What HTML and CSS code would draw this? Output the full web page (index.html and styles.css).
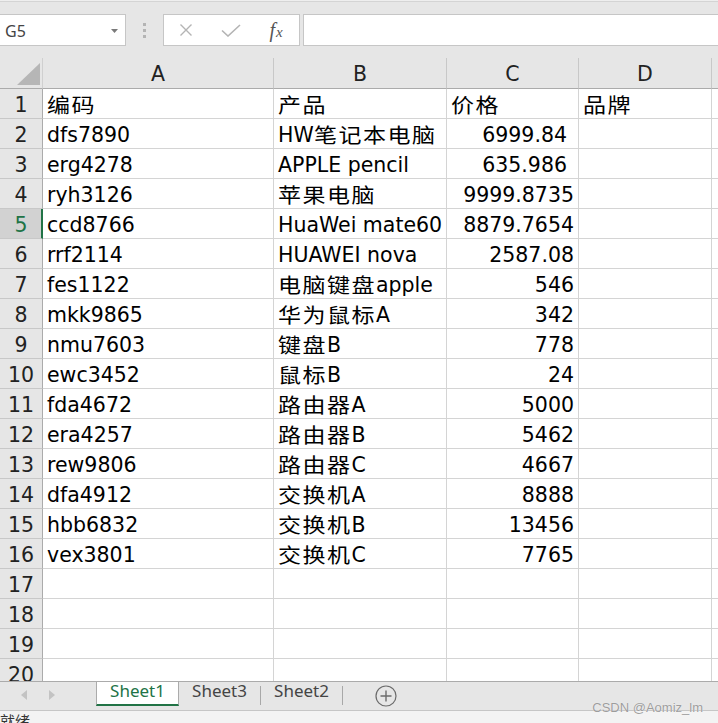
FILE: index.html
```html
<!DOCTYPE html>
<html lang="zh">
<head>
<meta charset="utf-8">
<title>Sheet</title>
<link rel="stylesheet" href="styles.css">
</head>
<body>
<div class="app">
  <div class="topline"></div>
  <div class="fbar">
    <div class="namebox"><span class="nb-text">G5</span><svg class="dd" width="7" height="4" viewBox="0 0 7 4"><path d="M0 0h7L3.5 4z" fill="#7a7a7a"/></svg></div>
    <div class="grip"><i></i><i></i><i></i></div>
    <div class="fbtns">
      <span class="fb"><svg width="14" height="14" viewBox="0 0 14 14"><path d="M1.5 1.5l11 11M12.5 1.5l-11 11" stroke="#b4b4b4" stroke-width="1.4" fill="none"/></svg></span>
      <span class="fb"><svg width="20" height="13" viewBox="0 0 20 13"><path d="M1 6.5l6 5.5L19 1" stroke="#b4b4b4" stroke-width="1.6" fill="none"/></svg></span>
      <span class="fb fx"><i>f</i><i class="x">x</i></span>
    </div>
    <div class="finput"></div>
  </div>

  <div class="sheet">
    <div class="grid">
      <div class="ch corner"><div class="tri"></div></div>
      <div class="ch">A</div><div class="ch">B</div><div class="ch">C</div><div class="ch">D</div><div class="ch"></div>

      <div class="rh">1</div><div class="c"><span class="k k2">编码</span></div><div class="c"><span class="k k2">产品</span></div><div class="c"><span class="k k2">价格</span></div><div class="c"><span class="k k2">品牌</span></div><div class="c"></div>
      <div class="rh">2</div><div class="c">dfs7890</div><div class="c">HW<span class="k k5">笔记本电脑</span></div><div class="c n wide">6999.84</div><div class="c"></div><div class="c"></div>
      <div class="rh">3</div><div class="c">erg4278</div><div class="c">APPLE pencil</div><div class="c n wide">635.986</div><div class="c"></div><div class="c"></div>
      <div class="rh">4</div><div class="c">ryh3126</div><div class="c"><span class="k k4">苹果电脑</span></div><div class="c n">9999.8735</div><div class="c"></div><div class="c"></div>
      <div class="rh sel">5</div><div class="c">ccd8766</div><div class="c">HuaWei mate60</div><div class="c n">8879.7654</div><div class="c"></div><div class="c"></div>
      <div class="rh">6</div><div class="c">rrf2114</div><div class="c">HUAWEI nova</div><div class="c n">2587.08</div><div class="c"></div><div class="c"></div>
      <div class="rh">7</div><div class="c">fes1122</div><div class="c"><span class="k k4">电脑键盘</span>apple</div><div class="c n">546</div><div class="c"></div><div class="c"></div>
      <div class="rh">8</div><div class="c">mkk9865</div><div class="c"><span class="k k4">华为鼠标</span>A</div><div class="c n">342</div><div class="c"></div><div class="c"></div>
      <div class="rh">9</div><div class="c">nmu7603</div><div class="c"><span class="k k2">键盘</span>B</div><div class="c n">778</div><div class="c"></div><div class="c"></div>
      <div class="rh">10</div><div class="c">ewc3452</div><div class="c"><span class="k k2">鼠标</span>B</div><div class="c n">24</div><div class="c"></div><div class="c"></div>
      <div class="rh">11</div><div class="c">fda4672</div><div class="c"><span class="k k3">路由器</span>A</div><div class="c n">5000</div><div class="c"></div><div class="c"></div>
      <div class="rh">12</div><div class="c">era4257</div><div class="c"><span class="k k3">路由器</span>B</div><div class="c n">5462</div><div class="c"></div><div class="c"></div>
      <div class="rh">13</div><div class="c">rew9806</div><div class="c"><span class="k k3">路由器</span>C</div><div class="c n">4667</div><div class="c"></div><div class="c"></div>
      <div class="rh">14</div><div class="c">dfa4912</div><div class="c"><span class="k k3">交换机</span>A</div><div class="c n">8888</div><div class="c"></div><div class="c"></div>
      <div class="rh">15</div><div class="c">hbb6832</div><div class="c"><span class="k k3">交换机</span>B</div><div class="c n">13456</div><div class="c"></div><div class="c"></div>
      <div class="rh">16</div><div class="c">vex3801</div><div class="c"><span class="k k3">交换机</span>C</div><div class="c n">7765</div><div class="c"></div><div class="c"></div>
      <div class="rh">17</div><div class="c"></div><div class="c"></div><div class="c"></div><div class="c"></div><div class="c"></div>
      <div class="rh">18</div><div class="c"></div><div class="c"></div><div class="c"></div><div class="c"></div><div class="c"></div>
      <div class="rh">19</div><div class="c"></div><div class="c"></div><div class="c"></div><div class="c"></div><div class="c"></div>
      <div class="rh">20</div><div class="c"></div><div class="c"></div><div class="c"></div><div class="c"></div><div class="c"></div>
    </div>
  </div>

  <div class="tabbar">
    <div class="nav">
      <svg width="6" height="10" viewBox="0 0 6 10"><path d="M6 0v10L0 5z" fill="#c3c3c3"/></svg>
      <svg width="6" height="10" viewBox="0 0 6 10"><path d="M0 0v10l6-5z" fill="#c3c3c3"/></svg>
    </div>
    <div class="tab active">Sheet1</div>
    <div class="tab">Sheet3</div><span class="sep"></span>
    <div class="tab">Sheet2</div><span class="sep"></span>
    <div class="add"><svg width="22" height="22" viewBox="0 0 22 22"><circle cx="11" cy="11" r="10" fill="none" stroke="#6b6b6b" stroke-width="1.2"/><path d="M11 5.5v11M5.5 11h11" stroke="#6b6b6b" stroke-width="1.4"/></svg></div>
  </div>
  <div class="status">就绪</div>
  <div class="wm">CSDN @Aomiz_lm</div>
</div>
</body>
</html>
```

FILE: styles.css
```css
html, body {
  margin: 0;
  padding: 0;
}
body {
  width: 718px;
  height: 723px;
  overflow: hidden;
  background: #e6e6e6;
  font-family: "DejaVu Sans", "Noto Sans CJK SC", sans-serif;
}
.app {
  position: relative;
  width: 718px;
  height: 723px;
  overflow: hidden;
}
.topline {
  height: 1px;
  background: #eeeeee;
  border-bottom: 1px solid #d4d4d4;
}

/* formula bar */
.fbar {
  display: flex;
  height: 32px;
  margin: 12px 0;
}
.namebox {
  width: 126px;
  box-sizing: border-box;
  background: #fff;
  border: 1px solid #c6c6c6;
  border-left: none;
  display: flex;
  align-items: center;
  justify-content: space-between;
  padding: 0 7px 0 5px;
  font-family: "Noto Sans", sans-serif;
  font-size: 16px;
  color: #444;
}
.nb-text {
  line-height: 20px;
  margin-top: 1px;
}
.dd {
  margin-top: 1px;
}
.grip {
  width: 37px;
  display: flex;
  flex-direction: column;
  align-items: center;
  justify-content: center;
  gap: 3px;
}
.grip i {
  width: 3px;
  height: 3px;
  background: #b4b4b4;
}
.fbtns {
  width: 137px;
  box-sizing: border-box;
  background: #fff;
  border: 1px solid #c6c6c6;
  display: grid;
  grid-template-columns: 44px 46px 44px;
  align-items: center;
}
.fb {
  display: flex;
  justify-content: center;
  align-items: center;
}
.fx {
  font-family: "Liberation Serif", serif;
  font-size: 20px;
  color: #555;
  line-height: 20px;
}
.fx i {
  font-style: italic;
}
.fx .x {
  font-size: 15px;
  margin-left: 1px;
  margin-top: 3px;
}
.finput {
  flex: 1;
  margin-left: 3px;
  background: #fff;
  border: 1px solid #c6c6c6;
  border-right: none;
}

/* sheet */
.sheet {
  height: 623px;
  overflow: hidden;
  background: #fff;
}
.grid {
  display: grid;
  grid-template-columns: 43px 231px 173px 132px 133px 1fr;
  grid-template-rows: 31px;
  grid-auto-rows: 30px;
  font-size: 20.5px;
  color: #000;
}
.grid > div {
  box-sizing: border-box;
  white-space: nowrap;
  padding-top: 3px;
  line-height: 26px;
}
.ch {
  background: #e6e6e6;
  border-right: 1px solid #c8c8c8;
  border-bottom: 1px solid #ababab;
  text-align: center;
  color: #222;
}
.grid > .corner {
  padding: 0;
  border-right-color: #d0d0d0;
}
.tri {
  width: 23px;
  height: 22px;
  margin: 5px 0 0 17px;
  background: #b6b6b6;
  clip-path: polygon(100% 0, 100% 100%, 0 100%);
}
.rh {
  background: #e6e6e6;
  border-right: 1px solid #ababab;
  border-bottom: 1px solid #c8c8c8;
  text-align: center;
  color: #222;
}
.rh.sel {
  background: #d2d2d2;
  color: #217346;
  border-right: 2px solid #217346;
  padding-left: 1px;
}
.c {
  background: #fff;
  border-right: 1px solid #d4d4d4;
  border-bottom: 1px solid #d4d4d4;
  padding-left: 4px;
  padding-right: 4px;
}
.c.n {
  text-align: right;
}
.c.wide {
  padding-right: 11px;
}
/* CJK runs: Noto CJK drawn slightly wide to match the DengXian glyphs */
.k {
  display: inline-block;
  font-family: "Noto Sans CJK SC", sans-serif;
  font-size: 20px;
  letter-spacing: 1.3px;
  line-height: 20px;
  vertical-align: -1px;
  transform: scaleX(1.15);
  transform-origin: 0 50%;
}
.k2 { margin-right: 6.4px; }
.k3 { margin-right: 9.6px; }
.k4 { margin-right: 12.8px; }
.k5 { margin-right: 16px; }

/* tabs */
.tabbar {
  height: 28px;
  border-top: 1px solid #ababab;
  border-bottom: 1px solid #c6c6c6;
  display: flex;
  align-items: flex-start;
  font-family: "Noto Sans", sans-serif;
  font-size: 17px;
}
.nav {
  width: 96px;
  height: 26px;
  box-sizing: border-box;
  display: flex;
  align-items: center;
  gap: 22px;
  padding-left: 21px;
}
.tab {
  width: 81px;
  height: 24px;
  box-sizing: border-box;
  text-align: center;
  line-height: 17px;
  color: #444;
}
.tab.active {
  width: 83px;
  background: #fff;
  color: #217346;
  border-left: 1px solid #ababab;
  border-right: 1px solid #ababab;
  border-bottom: 2px solid #217346;
}
.sep {
  width: 1px;
  height: 19px;
  margin-top: 4px;
  background: #a8a8a8;
}
.add {
  margin: 3px 0 0 32px;
  display: flex;
}
.status {
  height: 12px;
  overflow: hidden;
  background: #f3f3f3;
  font-family: "Noto Sans CJK SC", sans-serif;
  font-size: 15px;
  line-height: 20px;
  color: #333;
}
.wm {
  position: absolute;
  right: 15px;
  top: 700px;
  font-family: "Liberation Sans", sans-serif;
  font-size: 13px;
  line-height: 15px;
  color: #9d9d9d;
  text-shadow: 0 0 1px #ffffff;
}
```
